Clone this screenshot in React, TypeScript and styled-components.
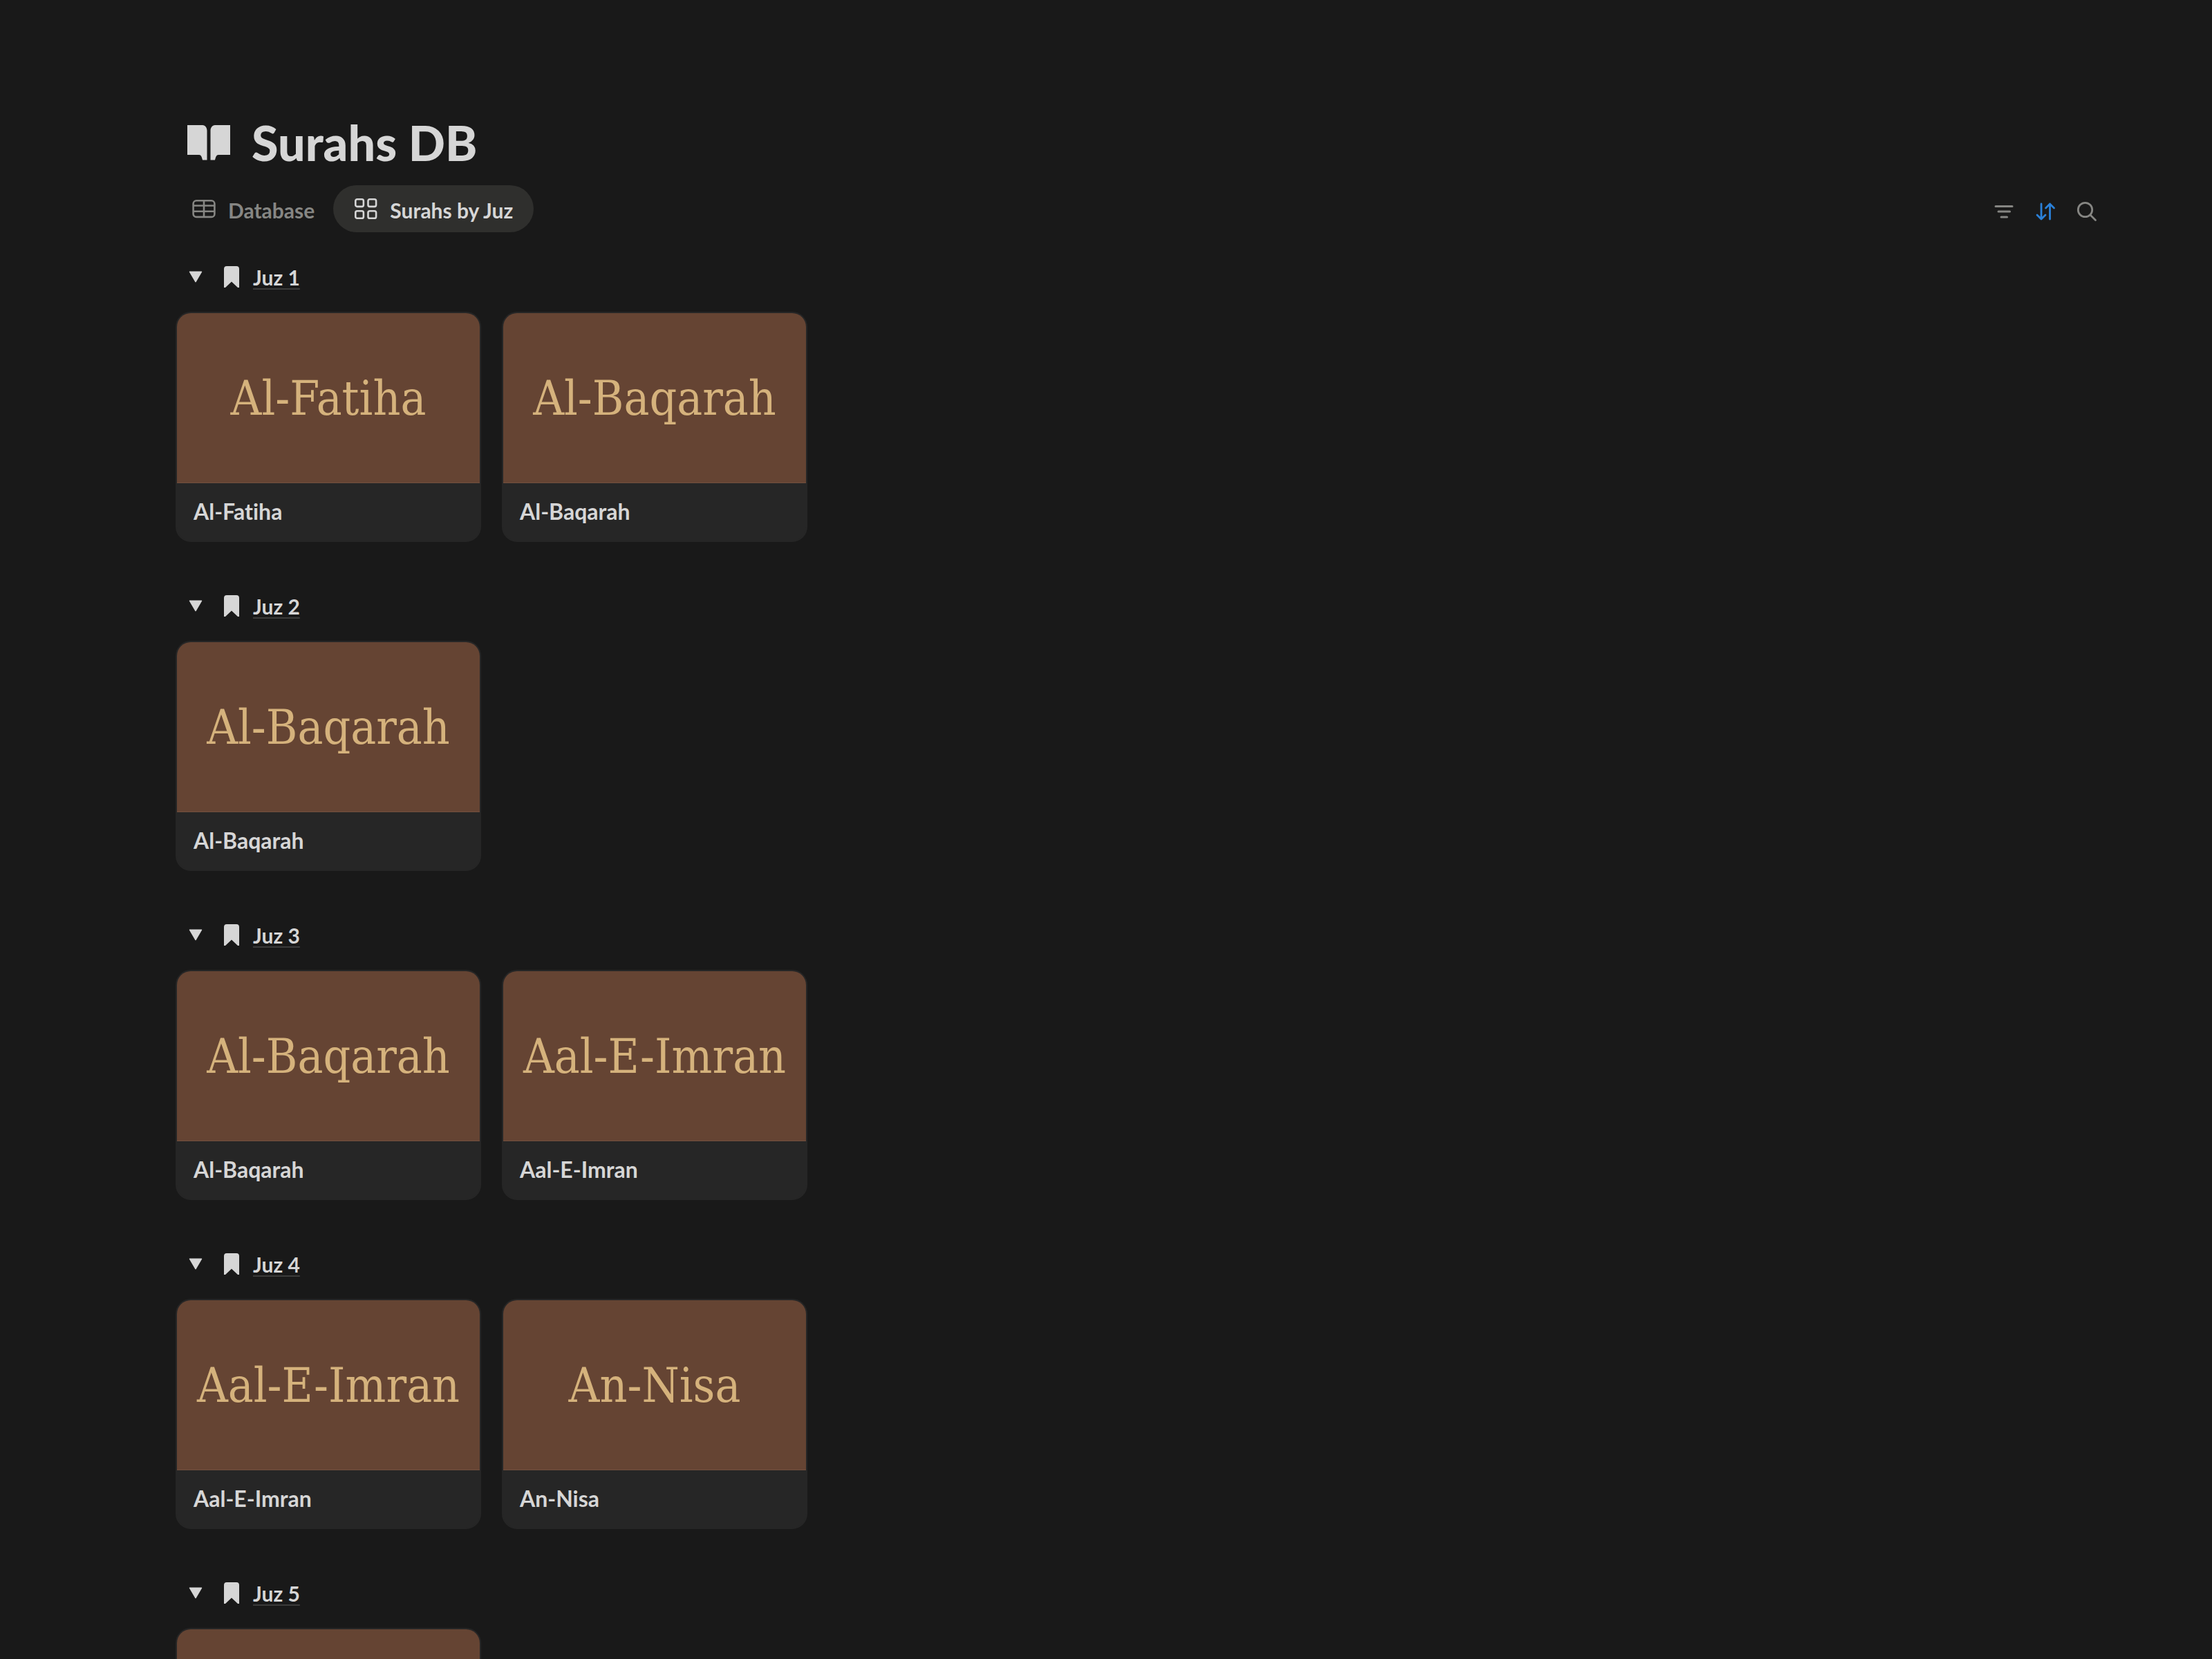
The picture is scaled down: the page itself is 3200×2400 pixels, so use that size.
import React, { useState } from "react";
import styled, { createGlobalStyle } from "styled-components";

const color = {
  page: "#191919",
  card: "#262626",
  pill: "#2f2f2d",
  text: "#d6d6d6",
  muted: "#868683",
  blue: "#2a80d8",
  cover: "#654433",
  coverEdge: "#72503f",
  coverText: "#d5b27c",
  underline: "#3c3c3b",
};

const GlobalStyle = createGlobalStyle`
  *, *::before, *::after { box-sizing: border-box; }
  body {
    margin: 0;
    background: ${color.page};
    color: ${color.text};
    font-family: Lato, "Open Sans", sans-serif;
    font-variant-ligatures: none;
  }
  button { font: inherit; color: inherit; background: none; border: 0; padding: 0; cursor: pointer; }
  a { color: inherit; text-decoration: none; }
  h1, h2, h3 { margin: 0; }
  svg { display: block; flex: none; }
`;

const Page = styled.main`
  height: 100vh;
  overflow-y: auto;
  scrollbar-width: none;
  padding: 166px 151px 60px 254px;
`;

const TitleRow = styled.header`
  display: flex;
  align-items: center;
  gap: 30px;
  padding-left: 16px;
`;

const Title = styled.h1`
  font-size: 70px;
  line-height: 80px;
  font-weight: 900;
`;

const Toolbar = styled.div`
  display: flex;
  align-items: center;
  justify-content: space-between;
  margin: 22px 0 31px;
`;

const Tabs = styled.div`
  display: flex;
  gap: 3px;
`;

const Tab = styled.button<{ $active: boolean }>`
  display: flex;
  align-items: center;
  gap: 18px;
  height: 68px;
  padding: 0 ${(p) => (p.$active ? 30 : 24)}px;
  border-radius: 34px;
  background: ${(p) => (p.$active ? color.pill : "transparent")};
  color: ${(p) => (p.$active ? color.text : color.muted)};
  font-size: 30px;
  font-weight: 700;
`;

const TabLabel = styled.span`
  padding-top: 4px;
  line-height: 36px;
`;

const Tools = styled.div`
  display: flex;
`;

const Tool = styled.button<{ $on?: boolean }>`
  display: flex;
  align-items: center;
  justify-content: center;
  width: 60px;
  height: 68px;
  padding-top: 8px;
  color: ${(p) => (p.$on ? color.blue : color.muted)};
`;

const Groups = styled.div`
  display: flex;
  flex-direction: column;
  gap: 59px;
`;

const GroupHead = styled.div`
  display: flex;
  align-items: center;
  height: 68px;
  margin-bottom: 16px;
  padding-left: 19px;
`;

const Toggle = styled.button<{ $open: boolean }>`
  margin-right: 30px;
  transform: rotate(${(p) => (p.$open ? 0 : -90)}deg);
`;

const GroupTitle = styled.h2`
  display: flex;
  align-items: center;
  gap: 19px;
  font-size: 30px;
  line-height: 40px;
  font-weight: 700;
`;

const GroupLink = styled.a`
  text-decoration: underline 2px ${color.underline};
  text-underline-offset: 4px;
  text-decoration-skip-ink: none;
`;

const Cards = styled.div`
  display: grid;
  grid-template-columns: repeat(auto-fill, 442px);
  gap: 30px;
`;

const Card = styled.a`
  display: block;
  overflow: hidden;
  border: 2px solid ${color.card};
  border-radius: 22px;
  background: ${color.card};
`;

const Cover = styled.div`
  display: flex;
  align-items: center;
  justify-content: center;
  height: 246px;
  border-bottom: 1px solid ${color.coverEdge};
  background: ${color.cover};
  color: ${color.coverText};
  font-family: "DejaVu Serif Condensed", "DejaVu Serif", serif;
  font-size: 69px;
  white-space: nowrap;
`;

const CardTitle = styled.h3`
  padding: 21px 24px 22px;
  font-size: 32px;
  line-height: 40px;
  font-weight: 700;
`;

const BookIcon = () => (
  <svg width="64" height="56" viewBox="0 0 64 56" fill="currentColor" aria-hidden="true">
    <path d="M1 3h22c4 0 6.500 4 6.500 8v42.500H23c-1-4-2-7.500-5-7.500H1z" />
    <path d="M63 3H41c-4 0-6.500 4-6.500 8v42.500H41c1-4 2-7.500 5-7.500h17z" />
  </svg>
);

const TableIcon = () => (
  <svg width="34" height="32" viewBox="0 0 34 32" fill="none" stroke="currentColor" strokeWidth="2.6" aria-hidden="true">
    <rect x="1.6" y="4.3" width="30.8" height="23.6" rx="4.5" />
    <path d="M1.600 11.500h30.800M1.600 19.800h30.800M17 4.300v23.600" />
  </svg>
);

const GalleryIcon = () => (
  <svg width="34" height="32" viewBox="0 0 34 32" fill="none" stroke="currentColor" strokeWidth="2.6" aria-hidden="true">
    <rect x="2.300" y="2.300" width="11.600" height="10.600" rx="2.400" />
    <rect x="20.500" y="2.300" width="11.600" height="10.600" rx="2.400" />
    <rect x="2.300" y="19.200" width="11.600" height="10.600" rx="2.400" />
    <rect x="20.500" y="19.200" width="11.600" height="10.600" rx="2.400" />
  </svg>
);

const FilterIcon = () => (
  <svg width="32" height="32" viewBox="0 0 32 32" stroke="currentColor" strokeWidth="3" strokeLinecap="round" aria-hidden="true">
    <path d="M4 8.500h24M8 16h16.500M12 24h8.500" />
  </svg>
);

const SortIcon = () => (
  <svg width="32" height="32" viewBox="0 0 32 32" fill="none" stroke="currentColor" strokeWidth="2.8" strokeLinecap="round" strokeLinejoin="round" aria-hidden="true">
    <path d="M10 5v22M4 21l6 6 6-6" />
    <path d="M22.500 27V5M16.500 11l6-6 6 6" />
  </svg>
);

const SearchIcon = () => (
  <svg width="32" height="32" viewBox="0 0 32 32" fill="none" stroke="currentColor" strokeWidth="2.8" strokeLinecap="round" aria-hidden="true">
    <circle cx="13.500" cy="13.500" r="10.200" />
    <path d="M21 21l7.500 7.500" />
  </svg>
);

const TriangleIcon = () => (
  <svg width="20" height="20" viewBox="0 0 20 20" fill="currentColor" stroke="currentColor" strokeWidth="1.500" strokeLinejoin="round" aria-hidden="true">
    <path d="M1.500 2.200h17L10 16.500z" />
  </svg>
);

const BookmarkIcon = () => (
  <svg width="24" height="32" viewBox="0 0 24 32" fill="currentColor" aria-hidden="true">
    <path d="M5 0h14a4 4 0 0 1 4 4v27h-2L12 22.500 3 31H1V4a4 4 0 0 1 4-4z" />
  </svg>
);

const views = [
  { name: "Database", Icon: TableIcon },
  { name: "Surahs by Juz", Icon: GalleryIcon },
];

const groups = [
  { name: "Juz 1", surahs: ["Al-Fatiha", "Al-Baqarah"] },
  { name: "Juz 2", surahs: ["Al-Baqarah"] },
  { name: "Juz 3", surahs: ["Al-Baqarah", "Aal-E-Imran"] },
  { name: "Juz 4", surahs: ["Aal-E-Imran", "An-Nisa"] },
  { name: "Juz 5", surahs: ["An-Nisa"] },
];

function Group({ name, surahs }: { name: string; surahs: string[] }) {
  const [open, setOpen] = useState(true);
  return (
    <section>
      <GroupHead>
        <Toggle $open={open} aria-label={`Toggle ${name}`} aria-expanded={open} onClick={() => setOpen(!open)}>
          <TriangleIcon />
        </Toggle>
        <GroupTitle>
          <BookmarkIcon />
          <GroupLink href="#">{name}</GroupLink>
        </GroupTitle>
      </GroupHead>
      {open && (
        <Cards>
          {surahs.map((surah) => (
            <Card key={surah} href="#">
              <Cover>{surah}</Cover>
              <CardTitle>{surah}</CardTitle>
            </Card>
          ))}
        </Cards>
      )}
    </section>
  );
}

export default function App() {
  const [view, setView] = useState("Surahs by Juz");
  return (
    <>
      <GlobalStyle />
      <Page>
        <TitleRow>
          <BookIcon />
          <Title>Surahs DB</Title>
        </TitleRow>
        <Toolbar>
          <Tabs role="tablist">
            {views.map(({ name, Icon }) => (
              <Tab key={name} role="tab" aria-selected={view === name} $active={view === name} onClick={() => setView(name)}>
                <Icon />
                <TabLabel>{name}</TabLabel>
              </Tab>
            ))}
          </Tabs>
          <Tools>
            <Tool aria-label="Filter"><FilterIcon /></Tool>
            <Tool aria-label="Sort" $on><SortIcon /></Tool>
            <Tool aria-label="Search"><SearchIcon /></Tool>
          </Tools>
        </Toolbar>
        <Groups>
          {groups.map((group) => (
            <Group key={group.name} {...group} />
          ))}
        </Groups>
      </Page>
    </>
  );
}
